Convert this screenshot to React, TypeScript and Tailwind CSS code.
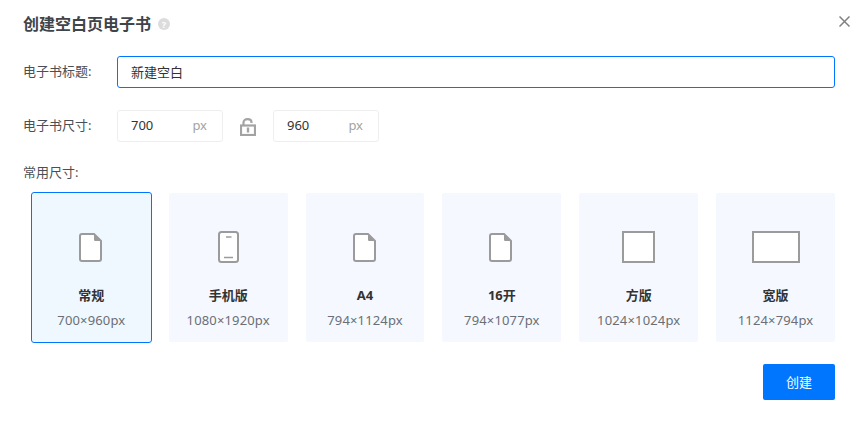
import React from "react";

const FONT = "font-['Noto_Sans','Noto_Sans_CJK_SC','Liberation_Sans',sans-serif]";

const PageIcon = () => (
  <svg width="23" height="29" viewBox="0 0 23 29" fill="none" className="-ml-[2px] mt-[1px]">
    <path d="M3 1H15L22 8V26C22 27.100 21.100 28 20 28H3C1.900 28 1 27.100 1 26V3C1 1.900 1.900 1 3 1Z" fill="#fff" stroke="#9b9b9b" strokeWidth="2" />
    <path d="M15 1V6.500C15 7.500 15.500 8 16.500 8H22Z" fill="#9b9b9b" />
  </svg>
);

const PhoneIcon = () => (
  <svg width="21" height="32" viewBox="0 0 21 32" fill="none">
    <rect x="1" y="1" width="19" height="30" rx="2.500" fill="#fff" stroke="#9b9b9b" strokeWidth="2" />
    <path d="M8 6H13.500" stroke="#9b9b9b" strokeWidth="1.500" />
    <path d="M6 26.500H15" stroke="#9b9b9b" strokeWidth="1.500" />
  </svg>
);

const SquareIcon = () => <div className="h-[32px] w-[33px] border-2 border-[#9b9b9b] bg-white" />;

const WideIcon = () => <div className="h-[32px] w-[48px] border-2 border-[#9b9b9b] bg-white" />;

const LockIcon = () => (
  <svg width="16" height="18" viewBox="0 0 16 18" fill="none">
    <path d="M3.500 7V4.500C3.500 2.400 5.200 1.200 7.500 1.200C9.800 1.200 11.500 2.400 11.500 4.500V5" stroke="#a3a3a3" strokeWidth="2.200" />
    <rect x="1" y="7.500" width="14" height="9.500" stroke="#a3a3a3" strokeWidth="2.200" fill="#fff" />
    <rect x="6.800" y="9.500" width="2.400" height="5" fill="#a3a3a3" />
  </svg>
);

const sizes = [
  { name: "常规", size: "700×960px", icon: <PageIcon />, active: true },
  { name: "手机版", size: "1080×1920px", icon: <PhoneIcon /> },
  { name: "A4", size: "794×1124px", icon: <PageIcon /> },
  { name: "16开", size: "794×1077px", icon: <PageIcon /> },
  { name: "方版", size: "1024×1024px", icon: <SquareIcon /> },
  { name: "宽版", size: "1124×794px", icon: <WideIcon /> },
];

const SizeInput = ({ value }: { value: string }) => (
  <div className="flex h-[32px] w-[106px] items-center justify-between rounded-[3px] border border-[#eeeeee] pl-[13px] pr-[15px] text-[13px]">
    <span className="text-[#333333]">{value}</span>
    <span className="text-[#a3a3a3]">px</span>
  </div>
);

export default function App() {
  return (
    <div className={`relative h-[423px] w-[866px] overflow-hidden bg-white pl-[23px] pr-[31px] pt-[14px] ${FONT}`}>
      <div className="flex h-[20px] items-center">
        <h1 className="text-[16px] font-bold leading-[20px] text-[#3f444b]">创建空白页电子书</h1>
        <span className="ml-[7px] flex h-[12px] w-[12px] items-center justify-center rounded-full bg-[#dcdcdc] text-[9px] font-bold leading-none text-white">?</span>
      </div>
      <button className="absolute right-[16px] top-[16px] text-[#808080]">
        <svg width="11" height="11" viewBox="0 0 11 11" fill="none" className="block">
          <path d="M0.500 0.500L10.500 10.500M10.500 0.500L0.500 10.500" stroke="currentColor" strokeWidth="1.500" />
        </svg>
      </button>

      <div className="mt-[22px] flex h-[32px] items-center">
        <label className="w-[94px] text-[13px] text-[#4a4f55]">电子书标题:</label>
        <div className="flex h-[32px] flex-1 items-center rounded-[3px] border border-[#0076ff] pl-[13px] pt-[1px] text-[13px] text-[#333333]">新建空白</div>
      </div>

      <div className="mt-[22px] flex h-[32px] items-center">
        <label className="w-[94px] text-[13px] text-[#4a4f55]">电子书尺寸:</label>
        <SizeInput value="700" />
        <div className="flex w-[50px] justify-center pt-[1px]">
          <LockIcon />
        </div>
        <SizeInput value="960" />
      </div>

      <div className="mt-[21px] text-[13px] leading-[18px] text-[#4a4f55]">常用尺寸:</div>

      <div className="ml-[8.9px] mt-[12px] grid grid-cols-6 gap-x-[17.94px]">
        {sizes.map((item) => (
          <div
            key={item.name}
            className={`flex h-[149px] flex-col items-center rounded-[2px] ${item.active ? "bg-[#eff7ff] outline outline-[#0076ff]" : "bg-[#f5f8ff]"}`}
          >
            <div className="mt-[37px] flex h-[34px] items-center justify-center">{item.icon}</div>
            <div className="mt-[22px] text-[13px] font-bold leading-[18px] text-[#333333]">{item.name}</div>
            <div className="mt-[7px] text-[13px] leading-[18px] tracking-[0.15px] text-[#6b6f75]">{item.size}</div>
          </div>
        ))}
      </div>

      <div className="mt-[22px] flex justify-end">
        <button className="h-[36px] w-[72px] rounded-[2px] bg-[#0076ff] pt-[1px] text-[13px] text-white">创建</button>
      </div>
    </div>
  );
}
